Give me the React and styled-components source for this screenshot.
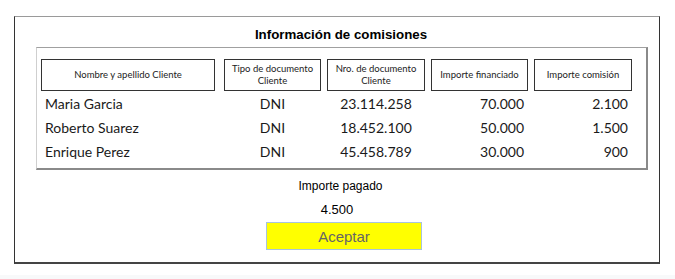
import React from "react";
import styled, { createGlobalStyle } from "styled-components";

const Global = createGlobalStyle`
  html, body { margin: 0; padding: 0; background: #f8f9fa; }
  body { font-family: "Liberation Sans", Arial, sans-serif; }
`;

const Page = styled.div`
  background: #ffffff;
  height: 275px;
  padding: 16px 0 0 14px;
  box-sizing: border-box;
`;

const Panel = styled.section`
  width: 646px;
  height: 248px;
  box-sizing: border-box;
  border: 1px solid #333;
  border-top-color: #9a9a9a;
  border-bottom: 2px solid #444;
  display: flex;
  flex-direction: column;
  align-items: center;
`;

const Title = styled.h1`
  margin: 10px 0 4px 0;
  font-family: "Liberation Sans", Arial, sans-serif;
  font-weight: bold;
  font-size: 13.3px;
  line-height: 16px;
  color: #000;
  align-self: center;
  padding-left: 8px;
`;

const TableBox = styled.div`
  align-self: flex-start;
  margin-left: 21px;
  width: 612px;
  box-sizing: border-box;
  border-style: solid;
  border-width: 1px 2px 2px 1px;
  border-color: #a0a0a0 #8a8a8a #8a8a8a #cfcfcf;
  padding: 11px 0 5px 4px;
`;

const Grid = styled.div`
  display: grid;
  grid-template-columns: 177px 97px 98px 97px 98px;
  column-gap: 6px;
`;

const HeadCell = styled.div`
  box-sizing: border-box;
  height: 32px;
  width: ${(p) => p.$w || "auto"};
  border: 1px solid #333;
  display: flex;
  align-items: center;
  justify-content: center;
  text-align: center;
  font-family: Lato, "Open Sans", sans-serif;
  font-size: 9.5px;
  line-height: 12px;
  color: #222;
  padding: 0 2px;
`;

const Cell = styled.div`
  height: 24px;
  display: flex;
  align-items: center;
  justify-content: ${(p) =>
    p.$align === "right" ? "flex-end" : p.$align === "center" ? "center" : "flex-start"};
  padding: ${(p) => (p.$align === "right" ? "0 4px 0 0" : p.$align === "left" ? "0 0 0 4px" : "0")};
  font-family: Lato, "Open Sans", sans-serif;
  font-size: 14px;
  color: #1a1a1a;
`;

const Label = styled.div`
  margin-top: 9px;
  font-size: 12px;
  line-height: 14px;
  color: #000;
  padding-left: 7px;
`;

const Amount = styled.div`
  margin-top: 9px;
  font-size: 13px;
  line-height: 15px;
  color: #000;
  padding-left: 0;
`;

const Button = styled.button`
  margin-top: 5px;
  margin-left: 14px;
  width: 156px;
  height: 28px;
  box-sizing: border-box;
  background: #ffff00;
  border: 1px solid #a8c4dc;
  font-family: "Liberation Sans", Arial, sans-serif;
  font-size: 15px;
  color: #666;
  padding: 0;
  cursor: pointer;
`;

const headers = [
  { text: "Nombre y apellido Cliente", w: "174px" },
  { text: "Tipo de documento Cliente" },
  { text: "Nro. de documento Cliente" },
  { text: "Importe financiado" },
  { text: "Importe comisión" },
];

const rows = [
  ["Maria Garcia", "DNI", "23.114.258", "70.000", "2.100"],
  ["Roberto Suarez", "DNI", "18.452.100", "50.000", "1.500"],
  ["Enrique Perez", "DNI", "45.458.789", "30.000", "900"],
];

const aligns = ["left", "center", "center", "right", "right"];

export default function App() {
  return (
    <>
      <Global />
      <Page>
        <Panel>
          <Title>Información de comisiones</Title>
          <TableBox>
            <Grid>
              {headers.map((h) => (
                <HeadCell key={h.text} $w={h.w}>
                  {h.text}
                </HeadCell>
              ))}
              {rows.map((r) =>
                r.map((v, i) => (
                  <Cell key={r[0] + i} $align={aligns[i]}>
                    {v}
                  </Cell>
                ))
              )}
            </Grid>
          </TableBox>
          <Label>Importe pagado</Label>
          <Amount>4.500</Amount>
          <Button>Aceptar</Button>
        </Panel>
      </Page>
    </>
  );
}
